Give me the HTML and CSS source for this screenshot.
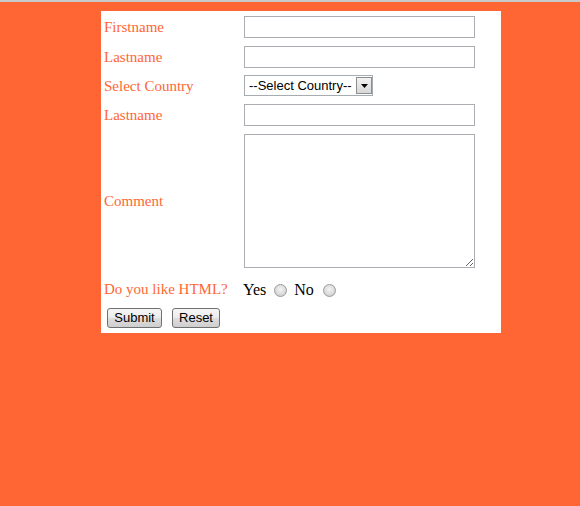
FILE: index.html
```html
<!DOCTYPE html>
<html>
<head>
<meta charset="utf-8">
<link rel="stylesheet" href="styles.css">
</head>
<body>
<form class="form">
  <table class="grid">
    <tr class="row-input">
      <td class="label">Firstname</td>
      <td class="field"><input class="text" type="text"></td>
    </tr>
    <tr class="row-input">
      <td class="label">Lastname</td>
      <td class="field"><input class="text" type="text"></td>
    </tr>
    <tr class="row-select">
      <td class="label">Select Country</td>
      <td class="field">
        <span class="select-wrap">
          <select class="select"><option>--Select Country--</option></select>
          <span class="select-btn"><svg width="7" height="4" viewBox="0 0 7 4"><path d="M0 0H7L3.5 4Z" fill="#000"/></svg></span>
        </span>
      </td>
    </tr>
    <tr class="row-input">
      <td class="label">Lastname</td>
      <td class="field"><input class="text" type="text"></td>
    </tr>
    <tr class="row-area">
      <td class="label">Comment</td>
      <td class="field"><textarea class="area"></textarea></td>
    </tr>
    <tr class="row-radio">
      <td class="label">Do you like HTML?</td>
      <td class="field">
        <span class="radios">
          <span class="opt">Yes</span>
          <input class="radio" type="radio" name="like">
          <span class="opt">No</span>
          <input class="radio" type="radio" name="like">
        </span>
      </td>
    </tr>
    <tr class="row-buttons">
      <td colspan="2" class="buttons-cell">
        <span class="buttons">
          <button class="btn btn-submit" type="submit">Submit</button>
          <button class="btn btn-reset" type="reset">Reset</button>
        </span>
      </td>
    </tr>
  </table>
</form>
</body>
</html>
```

FILE: styles.css
```css
html {
  background: #ff6633;
  border-top: 2px solid #c9c9c9;
}
body {
  margin: 0;
  padding: 9px 0 0 101px;
  font-family: "Liberation Serif", "Times New Roman", serif;
  font-size: 15px;
}
.form {
  margin: 0;
}
.grid {
  width: 400px;
  background: #ffffff;
  border-collapse: separate;
  border-spacing: 0;
  padding-top: 1px;
}
.grid td {
  padding: 4px 3px;
  vertical-align: middle;
}
.label {
  width: 134px;
  color: #ff6633;
  white-space: nowrap;
  padding-top: 5px;
}
.field {
  line-height: 0;
}
.text {
  box-sizing: border-box;
  width: 231px;
  height: 22px;
  margin: 0;
  border: 1px solid #abadb3;
  padding: 1px 3px;
  background: #fff;
  font: 13px "Liberation Sans", Arial, sans-serif;
  outline: none;
}
.row-select td {
  padding-top: 3px;
  padding-bottom: 4px;
}
.row-select td.label {
  padding-top: 4px;
  padding-bottom: 4px;
}
.select-wrap {
  position: relative;
  display: inline-block;
  line-height: 0;
}
.select {
  -webkit-appearance: none;
  appearance: none;
  box-sizing: border-box;
  width: 129px;
  height: 21px;
  margin: 0;
  border: 1px solid #a5acb2;
  border-radius: 0;
  background: #fff;
  padding: 0 16px 0 4px;
  font: 13px "Liberation Sans", Arial, sans-serif;
  color: #000;
  outline: none;
}
.select-btn {
  position: absolute;
  top: 2px;
  right: 1px;
  width: 16px;
  height: 17px;
  box-sizing: border-box;
  border: 1px solid #8d8d8d;
  background: linear-gradient(#f2f2f2, #d8d8d8);
  display: flex;
  align-items: center;
  justify-content: center;
  pointer-events: none;
}
.area {
  box-sizing: border-box;
  display: block;
  width: 231px;
  height: 134px;
  margin: 0;
  border: 1px solid #abadb3;
  resize: both;
  outline: none;
  font: 13px "Liberation Sans", Arial, sans-serif;
}
.row-radio td {
  height: 24px;
  padding-top: 6px;
  padding-bottom: 2px;
}
.row-radio td.label {
  padding-top: 5px;
  padding-bottom: 3px;
}
.radios {
  display: flex;
  align-items: center;
  line-height: 20px;
  margin-left: -1px;
  color: #000;
}
.opt {
  font-size: 16px;
}
.radio {
  -webkit-appearance: none;
  appearance: none;
  box-sizing: border-box;
  width: 13px;
  height: 13px;
  margin: 0 7px 0 8px;
  border: 1px solid #9a9a9a;
  border-radius: 50%;
  background: radial-gradient(circle at 50% 40%, #f4f4f4 0%, #dcdcdc 55%, #c4c4c4 100%);
}
.radio:last-child {
  margin-left: 9px;
}
.grid td.buttons-cell {
  line-height: 0;
  padding-bottom: 5px;
}
.buttons {
  display: flex;
  gap: 10px;
  padding-left: 3px;
}
.btn {
  box-sizing: border-box;
  height: 20px;
  margin: 0;
  padding: 0 6px;
  border: 1px solid #707070;
  border-radius: 3px;
  background: linear-gradient(#f6f6f6 0%, #ebebeb 50%, #dddddd 51%, #cfcfcf 100%);
  font: 13px "Liberation Sans", Arial, sans-serif;
  color: #000;
  line-height: 18px;
}
.btn-submit {
  width: 55px;
}
.btn-reset {
  width: 48px;
}
```
